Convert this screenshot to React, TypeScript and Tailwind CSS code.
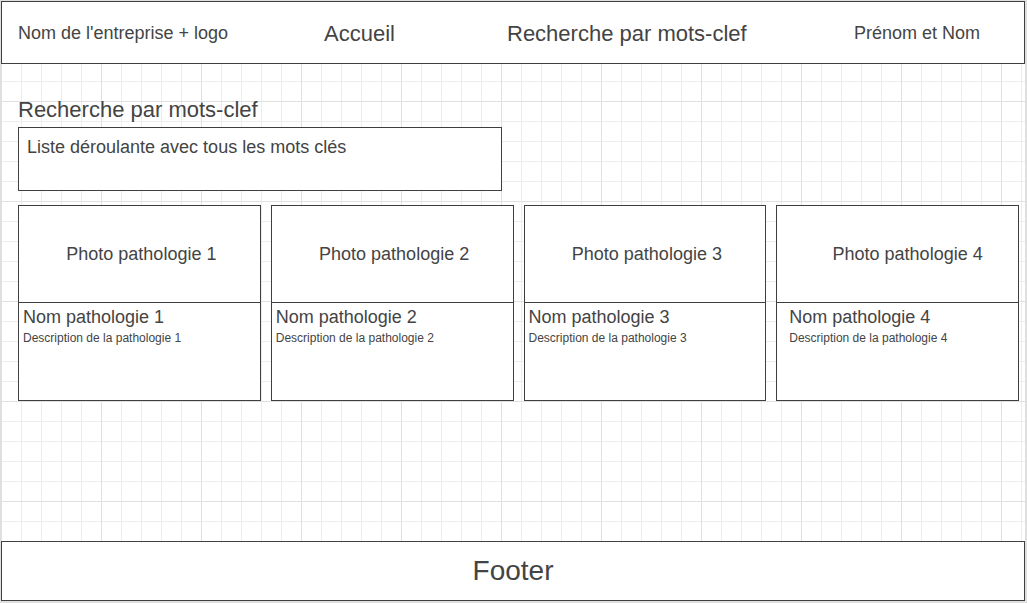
type Pathology = {
  id: number;
  photoClass: string;
  textClass: string;
};

const pathologies: Pathology[] = [
  { id: 1, photoClass: 'pl-1', textClass: 'px-1' },
  { id: 2, photoClass: 'pl-1', textClass: 'px-1' },
  { id: 3, photoClass: 'pl-1', textClass: 'px-1' },
  { id: 4, photoClass: 'pl-5', textClass: 'px-3' },
];

function Header() {
  return (
    <header className="border border-[#3f3f3f] bg-white">
      <nav
        aria-label="Navigation principale"
        className="grid h-[61px] grid-cols-[306fr_183fr_347fr_170fr] items-center pl-4 text-lg whitespace-nowrap"
      >
        <a href="#logo">Nom de l'entreprise + logo</a>
        <a href="#accueil" className="pt-1 text-[22px]">
          Accueil
        </a>
        <a href="#recherche" className="pt-1 text-[22px]">
          Recherche par mots-clef
        </a>
        <a href="#profil">Prénom et Nom</a>
      </nav>
    </header>
  );
}

function PathologyCard({ id, photoClass, textClass }: Pathology) {
  return (
    <article className="border border-[#3f3f3f] bg-white">
      <div
        className={`flex h-24 items-center justify-center text-lg ${photoClass}`}
      >
        Photo pathologie {id}
      </div>
      <div className={`h-[98px] border-t border-[#3f3f3f] ${textClass}`}>
        <h2 className="text-lg leading-7">Nom pathologie {id}</h2>
        <p className="text-xs leading-[14px]">
          Description de la pathologie {id}
        </p>
      </div>
    </article>
  );
}

export default function App() {
  return (
    <div className="flex min-h-screen flex-col border-t border-r-2 border-b-2 border-l border-[#dfdfdf] bg-white font-['Liberation_Sans',Arial,sans-serif] text-[#444444]">
      <div className="flex flex-1 flex-col bg-[linear-gradient(to_right,#e0e0e0_1px,transparent_1px),linear-gradient(to_bottom,#e0e0e0_1px,transparent_1px),linear-gradient(to_right,#ededed_1px,transparent_1px),linear-gradient(to_bottom,#ededed_1px,transparent_1px)] bg-[size:100px_100px,100px_100px,20px_20px,20px_20px]">
        <Header />
        <main id="recherche" className="flex-1 pt-8 pr-1.5 pb-8 pl-[17px]">
          <label
            htmlFor="mots-clef"
            className="block pb-1 text-[22px] leading-[27px]"
          >
            Recherche par mots-clef
          </label>
          <select
            id="mots-clef"
            className="block h-16 w-full max-w-[484px] appearance-none border border-[#3f3f3f] bg-white pb-6 pl-2 text-lg"
          >
            <option>Liste déroulante avec tous les mots clés</option>
          </select>
          <section
            aria-label="Pathologies"
            className="mt-3.5 grid grid-cols-4 gap-2.5"
          >
            {pathologies.map((pathology) => (
              <PathologyCard key={pathology.id} {...pathology} />
            ))}
          </section>
        </main>
        <footer className="flex h-[60px] items-center justify-center border border-[#3f3f3f] bg-white text-[28px]">
          Footer
        </footer>
      </div>
    </div>
  );
}
